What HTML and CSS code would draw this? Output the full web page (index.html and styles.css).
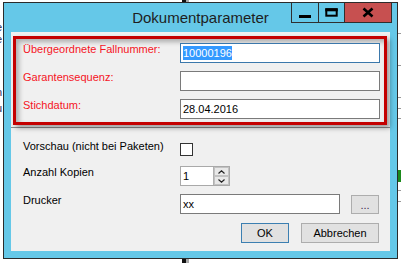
FILE: index.html
```html
<!DOCTYPE html>
<html lang="de">
<head>
    <meta charset="UTF-8">
    <meta name="viewport" content="width=device-width, initial-scale=1.0">
    <title>Dokumentparameter</title>
    <link rel="stylesheet" href="styles.css">
</head>
<body>
    <div class="desktop">
        <!-- bits of the application behind the dialog -->
        <div class="bg-bar"></div>
        <div class="bg-bar-light"></div>
        <span class="bg-char" style="top: 22px">e</span>
        <span class="bg-char" style="top: 34px">e</span>
        <span class="bg-char" style="top: 87px">n</span>
        <span class="bg-char" style="top: 103px">u</span>
        <div class="bg-rule" style="top: 33px"></div>
        <div class="bg-rule" style="top: 65px"></div>
        <div class="bg-rule" style="top: 97px"></div>
        <div class="bg-rule" style="top: 108px"></div>
        <div class="bg-rule" style="top: 118px"></div>
        <div class="bg-green"></div>
        <div class="bg-rule" style="top: 190px"></div>
        <div class="bg-rule" style="top: 201px"></div>

        <div class="window">
            <div class="titlebar">
                <span class="title">Dokumentparameter</span>
                <div class="caption">
                    <span class="cap-btn cap-min">
                        <svg width="26" height="19" viewBox="0 0 26 19"><rect x="7" y="12" width="12" height="3" fill="#000"/></svg>
                    </span>
                    <span class="cap-btn cap-max">
                        <svg width="25" height="19" viewBox="0 0 25 19">
                            <rect x="7.3" y="6.3" width="10.4" height="6.4" fill="none" stroke="#000" stroke-width="2"/>
                            <rect x="6.3" y="5.3" width="12.4" height="3" fill="#000"/>
                        </svg>
                    </span>
                    <span class="cap-btn cap-close">
                        <svg width="46" height="19" viewBox="0 0 46 19">
                            <path d="M18.5 5.5 L27.5 13.5 M27.5 5.5 L18.5 13.5" stroke="#000" stroke-width="2.6" fill="none"/>
                        </svg>
                    </span>
                </div>
            </div>

            <div class="client">
                <div class="top-section">
                    <div class="highlight">
                        <div class="form-grid">
                            <label class="lbl lbl-red">Übergeordnete Fallnummer:</label>
                            <div class="field field-focus"><span class="sel">10000196</span></div>

                            <label class="lbl lbl-red">Garantensequenz:</label>
                            <div class="field"></div>

                            <label class="lbl lbl-red">Stichdatum:</label>
                            <div class="field"><span class="val">28.04.2016</span></div>
                        </div>
                    </div>
                </div>

                <div class="bottom-section">
                    <div class="row row-check">
                        <label class="lbl">Vorschau (nicht bei Paketen)</label>
                        <span class="checkbox"></span>
                    </div>

                    <div class="row row-num">
                        <label class="lbl">Anzahl Kopien</label>
                        <div class="numeric">
                            <span class="num-value">1</span>
                            <div class="spinner">
                                <span class="spin">
                                    <svg width="7" height="4" viewBox="0 0 7 4"><path d="M0.5 3.5 L3.5 0.8 L6.5 3.5" stroke="#222" stroke-width="1.2" fill="none"/></svg>
                                </span>
                                <span class="spin">
                                    <svg width="7" height="4" viewBox="0 0 7 4"><path d="M0.5 0.5 L3.5 3.2 L6.5 0.5" stroke="#222" stroke-width="1.2" fill="none"/></svg>
                                </span>
                            </div>
                        </div>
                    </div>

                    <div class="row row-printer">
                        <label class="lbl">Drucker</label>
                        <div class="field field-printer"><span class="val">xx</span></div>
                        <span class="btn btn-browse">...</span>
                    </div>

                    <div class="dialog-buttons">
                        <span class="btn btn-default btn-ok">OK</span>
                        <span class="btn btn-cancel">Abbrechen</span>
                    </div>
                </div>
            </div>
        </div>
    </div>
</body>
</html>
```

FILE: styles.css
```css
* {
    box-sizing: border-box;
}

body {
    margin: 0;
    background-color: #fff;
    font-family: "Liberation Sans", Arial, sans-serif;
}

.desktop {
    position: relative;
    width: 401px;
    height: 263px;
    overflow: hidden;
    background-color: #fff;
}

/* background application */
.bg-bar {
    position: absolute;
    left: 182px;
    top: 0;
    width: 4px;
    height: 263px;
    background-color: #111;
}

.bg-bar-light {
    position: absolute;
    left: 186px;
    top: 0;
    width: 3px;
    height: 263px;
    background-color: #a8a8a8;
}

.bg-char {
    position: absolute;
    left: -4px;
    font-size: 11px;
    line-height: 11px;
    color: #1d2a5a;
}

.bg-rule {
    position: absolute;
    left: 398px;
    width: 3px;
    height: 1px;
    background-color: #9a9a9a;
}

.bg-green {
    position: absolute;
    left: 398px;
    top: 170px;
    width: 3px;
    height: 12px;
    background-color: #1b8a1b;
}

/* dialog window */
.window {
    position: absolute;
    left: 3px;
    top: 2px;
    width: 395px;
    height: 257px;
    border: 1px solid #2b2b2b;
    background-color: #65c8e8;
    display: flex;
    flex-direction: column;
}

.titlebar {
    position: relative;
    height: 29px;
    flex: none;
}

.title {
    display: block;
    text-align: center;
    padding-top: 6px;
    font-size: 15px;
    line-height: 17px;
    color: #1e1e1e;
}

.caption {
    position: absolute;
    top: 0;
    right: 5px;
    display: flex;
}

.cap-btn {
    display: block;
    height: 20px;
    border: 1px solid #2f2f2f;
    border-top: none;
}

.cap-btn svg {
    display: block;
}

.cap-min {
    width: 28px;
}

.cap-max {
    width: 26px;
    border-left: none;
}

.cap-close {
    width: 47px;
    border-left: none;
    background-color: #c75050;
}

.client {
    flex: 1;
    margin: 0 7px 7px;
    background-color: #f0f0f0;
    display: flex;
    flex-direction: column;
}

.top-section {
    height: 96px;
    flex: none;
    padding: 4px 0 0 2px;
    border-bottom: 1px solid #8a8a8a;
}

.highlight {
    width: 374px;
    height: 89px;
    padding: 4px 0 0 7px;
    border: 3px solid #c40000;
    box-shadow: 3px 3px 5px rgba(0, 0, 0, 0.35), inset 3px 3px 5px rgba(0, 0, 0, 0.28);
}

.form-grid {
    display: grid;
    grid-template-columns: 157px 200px;
    grid-auto-rows: 20px;
    row-gap: 8px;
}

.lbl {
    font-size: 11px;
    line-height: 13px;
    color: #000;
}

.lbl-red {
    color: #f5141e;
}

.field {
    height: 20px;
    border: 1px solid #7a7a7a;
    background-color: #fff;
    padding-left: 2px;
    display: flex;
    align-items: center;
    font-size: 11px;
}

.field-focus {
    border-color: #3b78ab;
}

.sel,
.val {
    line-height: 14px;
}

.sel {
    background-color: #3399ff;
    color: #fff;
}

.bottom-section {
    flex: 1;
    padding: 12px 11px 0 12px;
}

.row {
    display: flex;
}

.row .lbl {
    width: 157px;
    flex: none;
}

.row-check {
    height: 16px;
}

.checkbox {
    width: 13px;
    height: 13px;
    margin-top: 3px;
    border: 1px solid #333;
    background-color: #fff;
}

.row-num {
    height: 20px;
    margin-top: 10px;
}

.numeric {
    width: 50px;
    height: 20px;
    border: 1px solid #a9a9a9;
    background-color: #fff;
    display: flex;
}

.num-value {
    flex: 1;
    padding-left: 2px;
    font-size: 11px;
    line-height: 18px;
}

.spinner {
    width: 16px;
    display: flex;
    flex-direction: column;
    border-left: 1px solid #b0b0b0;
}

.spin {
    flex: 1;
    display: flex;
    align-items: center;
    justify-content: center;
    background-color: #e8e8e8;
    border: 1px solid #c2c2c2;
}

.spin svg {
    display: block;
}

.row-printer {
    height: 20px;
    margin-top: 8px;
}

.field-printer {
    width: 160px;
}

.btn {
    height: 20px;
    display: flex;
    align-items: center;
    justify-content: center;
    background-color: #e1e1e1;
    border: 1px solid #adadad;
    font-size: 11px;
    color: #000;
}

.btn-default {
    border-color: #3c7fb1;
}

.btn-browse {
    width: 28px;
    height: 19px;
    margin-top: 1px;
    margin-left: 11px;
    color: #3a2a4a;
}

.dialog-buttons {
    display: flex;
    justify-content: flex-end;
    gap: 12px;
    margin-top: 9px;
}

.btn-ok {
    width: 48px;
}

.btn-cancel {
    width: 78px;
}
```
